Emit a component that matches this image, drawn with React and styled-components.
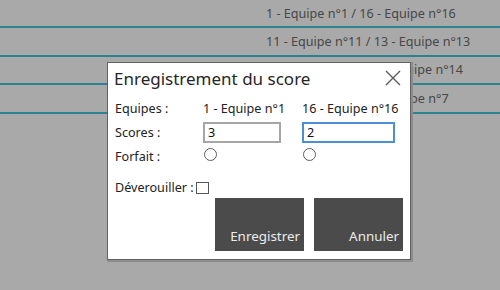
import React from 'react';
import styled, { createGlobalStyle } from 'styled-components';

const GlobalStyle = createGlobalStyle`
  html, body {
    margin: 0;
    padding: 0;
    background: #a9a9a9;
    font-family: "Noto Sans", "Open Sans", sans-serif;
  }
`;

const Page = styled.div`
  position: relative;
  width: 500px;
  height: 290px;
  overflow: hidden;
  background: #a9a9a9;
`;

const MatchList = styled.div`
  display: flex;
  flex-direction: column;
`;

const MatchRow = styled.div`
  height: 26.5px;
  border-bottom: 2px solid #2b8290;
  display: flex;
  align-items: center;
  padding-left: 266px;
  font-size: 12.6px;
  color: #474747;
  white-space: nowrap;
  &:first-child {
    height: 26px;
  }
`;

const Dialog = styled.div`
  position: absolute;
  left: 107px;
  top: 62px;
  width: 304px;
  height: 198px;
  background: #fff;
  border: 1px solid #626262;
  box-shadow: 1px 1px 0 1px #8c8c8c;
  display: flex;
  flex-direction: column;
  padding: 0 7px 0 6px;
  box-sizing: border-box;
  color: #222;
`;

const TitleBar = styled.div`
  display: flex;
  align-items: center;
  justify-content: space-between;
  height: 30px;
`;

const Title = styled.div`
  font-size: 17px;
  color: #262626;
`;

const CloseButton = styled.button`
  border: none;
  background: none;
  padding: 0;
  margin-right: 2px;
  width: 16px;
  height: 16px;
  display: flex;
  cursor: pointer;
`;

const Form = styled.div`
  display: grid;
  grid-template-columns: 89px 99px 1fr;
  grid-auto-rows: 24px;
  align-items: center;
  font-size: 12.6px;
  white-space: nowrap;
  margin-top: 3px;
`;

const Label = styled.span`
  color: #222;
  padding-left: 1px;
`;

const ScoreInput = styled.input`
  box-sizing: border-box;
  width: ${p => p.$w}px;
  height: 21px;
  border: 2px solid ${p => (p.$focused ? '#4d8fd6' : '#a6a6a6')};
  padding: 0 3px;
  font: inherit;
  font-size: 12.6px;
  color: #111;
  outline: none;
`;

const Radio = styled.span`
  display: inline-block;
  width: 11px;
  height: 11px;
  border: 1px solid #606060;
  border-radius: 50%;
  margin-left: 1px;
`;

const UnlockRow = styled.div`
  display: flex;
  align-items: center;
  font-size: 12.6px;
  margin-top: 11px;
  padding-left: 1px;
`;

const Checkbox = styled.span`
  display: inline-block;
  width: 11px;
  height: 10px;
  border: 1px solid #555;
  margin-left: 2px;
`;

const Buttons = styled.div`
  display: flex;
  justify-content: flex-end;
  gap: 10px;
  margin-top: 2px;
`;

const ActionButton = styled.button`
  width: 89px;
  height: 53px;
  background: #4b4b4b;
  border: none;
  color: #ececec;
  font-family: inherit;
  font-size: 13.4px;
  display: flex;
  align-items: flex-end;
  justify-content: flex-end;
  padding: 0 4px 6px 0;
  box-sizing: border-box;
`;

const matches = [
  '1 - Equipe n°1 / 16 - Equipe n°16',
  '11 - Equipe n°11 / 13 - Equipe n°13',
  '12 - Equipe n°6 / 14 - Equipe n°14',
  '10 - Equipe n°2 / 7 - Equipe n°7',
];

export default function App() {
  return (
    <Page>
      <GlobalStyle />
      <MatchList>
        {matches.map(m => (
          <MatchRow key={m}>{m}</MatchRow>
        ))}
      </MatchList>
      <Dialog>
        <TitleBar>
          <Title>Enregistrement du score</Title>
          <CloseButton aria-label="Fermer">
            <svg width="16" height="16" viewBox="0 0 16 16">
              <path d="M1 1 L15 15 M15 1 L1 15" stroke="#5a5a5a" strokeWidth="1.4" fill="none" />
            </svg>
          </CloseButton>
        </TitleBar>
        <Form>
          <Label>Equipes :</Label>
          <span>1 - Equipe n°1</span>
          <span>16 - Equipe n°16</span>
          <Label>Scores :</Label>
          <span><ScoreInput $w={78} defaultValue="3" /></span>
          <span><ScoreInput $w={93} $focused defaultValue="2" /></span>
          <Label>Forfait :</Label>
          <span><Radio /></span>
          <span><Radio /></span>
        </Form>
        <UnlockRow>
          Déverouiller :<Checkbox />
        </UnlockRow>
        <Buttons>
          <ActionButton>Enregistrer</ActionButton>
          <ActionButton>Annuler</ActionButton>
        </Buttons>
      </Dialog>
    </Page>
  );
}
